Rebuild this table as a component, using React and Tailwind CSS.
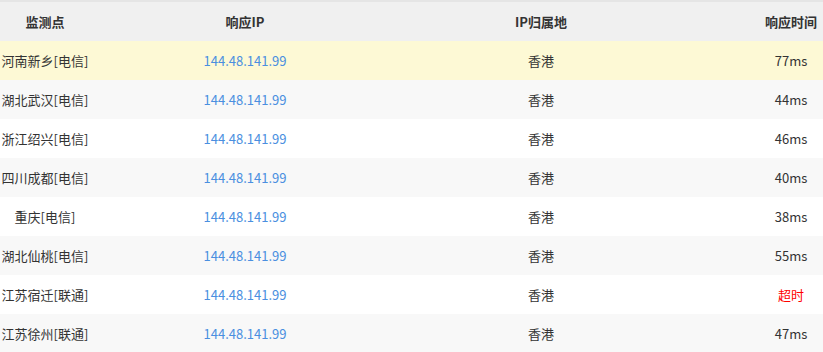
const rows = [
  { name: "河南新乡[电信]", time: "77ms" },
  { name: "湖北武汉[电信]", time: "44ms" },
  { name: "浙江绍兴[电信]", time: "46ms" },
  { name: "四川成都[电信]", time: "40ms" },
  { name: "重庆[电信]", time: "38ms" },
  { name: "湖北仙桃[电信]", time: "55ms" },
  { name: "江苏宿迁[联通]", time: "超时", timeout: true },
  { name: "江苏徐州[联通]", time: "47ms" },
];

export default function App() {
  return (
    <div className="w-[823px] h-[352px] overflow-hidden bg-white text-[13px] text-[#333] font-['Noto_Sans_CJK_SC','Noto_Sans',sans-serif]">
      <div className="w-[900px] border-t-2 border-[#e5e5e5]">
        {/* header */}
        <div className="grid grid-cols-[90px_310px_282px_218px] h-[39px] items-center bg-[#f0f0f0] font-bold text-center">
          <div>监测点</div>
          <div>响应IP</div>
          <div>IP归属地</div>
          <div>响应时间</div>
        </div>

        {rows.map((r, i) => (
          <div
            key={i}
            className={
              "grid grid-cols-[90px_310px_282px_218px] h-[39px] items-center text-center " +
              (i === 0 ? "bg-[#fdf9d5]" : i % 2 === 1 ? "bg-[#f8f8f8]" : "bg-white")
            }
          >
            <div className="whitespace-nowrap flex justify-center">{r.name}</div>
            <div className="text-[#4a8fe0]">144.48.141.99</div>
            <div>香港</div>
            <div className={r.timeout ? "text-[#ff0000]" : ""}>{r.time}</div>
          </div>
        ))}
      </div>
    </div>
  );
}
